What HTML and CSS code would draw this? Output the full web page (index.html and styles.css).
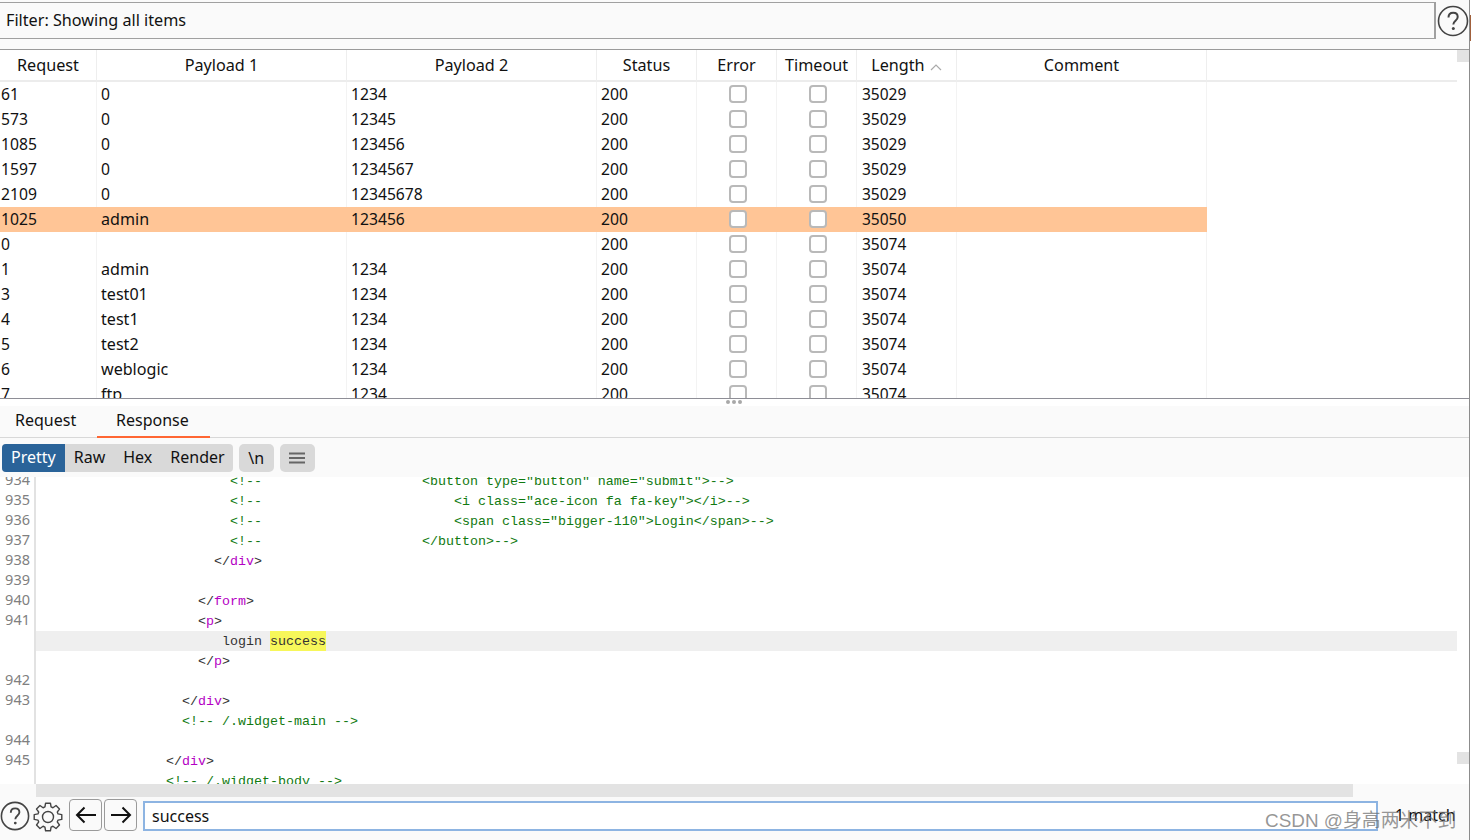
FILE: index.html
```html
<!DOCTYPE html>
<html lang="en">
<head>
<meta charset="utf-8">
<title>Intruder results</title>
<link rel="stylesheet" href="styles.css">
</head>
<body>
<div class="app">
  <div class="filterbar">
    <div class="filterbox">Filter: Showing all items</div>
    <svg class="help-top" width="32" height="32" viewBox="0 0 32 32"><circle cx="16" cy="16" r="14.5" fill="none" stroke="#444" stroke-width="1.6"/><path d="M11.5 12.5c0-3 2-4.700 4.700-4.700s4.500 1.800 4.500 4.300c0 3.600-4.400 3.700-4.400 7.400" fill="none" stroke="#444" stroke-width="2"/><circle cx="16.300" cy="23.500" r="1.500" fill="#444"/></svg>
  </div>
  <div class="results">
    <div class="tablewrap">
      <table class="grid">
        <colgroup><col class="c-req"><col class="c-pay"><col class="c-pay"><col class="c-st"><col class="c-chk"><col class="c-chk"><col class="c-st"><col class="c-pay"><col></colgroup>
        <thead>
          <tr><th>Request</th><th>Payload 1</th><th>Payload 2</th><th>Status</th><th>Error</th><th>Timeout</th><th>Length <svg class="sort" width="12" height="8" viewBox="0 0 12 8"><path d="M1 7l5-5 5 5" fill="none" stroke="#aaa" stroke-width="1.200"/></svg></th><th>Comment</th><th class="blank"></th></tr>
        </thead>
        <tbody>
          <tr><td class="first">61</td><td>0</td><td>1234</td><td>200</td><td class="ck"><i></i></td><td class="ck"><i></i></td><td class="len">35029</td><td></td><td class="blank"></td></tr>
          <tr><td class="first">573</td><td>0</td><td>12345</td><td>200</td><td class="ck"><i></i></td><td class="ck"><i></i></td><td class="len">35029</td><td></td><td class="blank"></td></tr>
          <tr><td class="first">1085</td><td>0</td><td>123456</td><td>200</td><td class="ck"><i></i></td><td class="ck"><i></i></td><td class="len">35029</td><td></td><td class="blank"></td></tr>
          <tr><td class="first">1597</td><td>0</td><td>1234567</td><td>200</td><td class="ck"><i></i></td><td class="ck"><i></i></td><td class="len">35029</td><td></td><td class="blank"></td></tr>
          <tr><td class="first">2109</td><td>0</td><td>12345678</td><td>200</td><td class="ck"><i></i></td><td class="ck"><i></i></td><td class="len">35029</td><td></td><td class="blank"></td></tr>
          <tr class="hit"><td class="first">1025</td><td class="word">admin</td><td>123456</td><td>200</td><td class="ck"><i></i></td><td class="ck"><i></i></td><td class="len">35050</td><td></td><td class="blank"></td></tr>
          <tr><td class="first">0</td><td></td><td></td><td>200</td><td class="ck"><i></i></td><td class="ck"><i></i></td><td class="len">35074</td><td></td><td class="blank"></td></tr>
          <tr><td class="first">1</td><td class="word">admin</td><td>1234</td><td>200</td><td class="ck"><i></i></td><td class="ck"><i></i></td><td class="len">35074</td><td></td><td class="blank"></td></tr>
          <tr><td class="first">3</td><td class="word">test01</td><td>1234</td><td>200</td><td class="ck"><i></i></td><td class="ck"><i></i></td><td class="len">35074</td><td></td><td class="blank"></td></tr>
          <tr><td class="first">4</td><td class="word">test1</td><td>1234</td><td>200</td><td class="ck"><i></i></td><td class="ck"><i></i></td><td class="len">35074</td><td></td><td class="blank"></td></tr>
          <tr><td class="first">5</td><td class="word">test2</td><td>1234</td><td>200</td><td class="ck"><i></i></td><td class="ck"><i></i></td><td class="len">35074</td><td></td><td class="blank"></td></tr>
          <tr><td class="first">6</td><td class="word">weblogic</td><td>1234</td><td>200</td><td class="ck"><i></i></td><td class="ck"><i></i></td><td class="len">35074</td><td></td><td class="blank"></td></tr>
          <tr><td class="first">7</td><td class="word">ftp</td><td>1234</td><td>200</td><td class="ck"><i></i></td><td class="ck"><i></i></td><td class="len">35074</td><td></td><td class="blank"></td></tr>
        </tbody>
      </table>
    </div>
    <div class="vscroll"><div class="vthumb"></div></div>
  </div>
  <div class="sash"><span></span><span></span><span></span></div>
  <div class="tabs">
    <div class="tab tab-req">Request</div>
    <div class="tab tab-active">Response</div>
  </div>
  <div class="toolbar">
    <div class="seg">
      <span class="seg-btn seg-on">Pretty</span><span class="seg-btn">Raw</span><span class="seg-btn">Hex</span><span class="seg-btn">Render</span>
    </div>
    <div class="tool-btn tool-n">\n</div>
    <div class="tool-btn tool-menu"><svg width="16" height="12" viewBox="0 0 16 12"><path d="M0 1.500h16M0 6h16M0 10.500h16" stroke="#666" stroke-width="2"/></svg></div>
  </div>
  <div class="viewer">
    <div class="code">
      <div class="ln"><span class="no">934</span><span class="tx cm">                        &lt;!--                    &lt;button type="button" name="submit"&gt;--&gt;</span></div>
      <div class="ln"><span class="no">935</span><span class="tx cm">                        &lt;!--                        &lt;i class="ace-icon fa fa-key"&gt;&lt;/i&gt;--&gt;</span></div>
      <div class="ln"><span class="no">936</span><span class="tx cm">                        &lt;!--                        &lt;span class="bigger-110"&gt;Login&lt;/span&gt;--&gt;</span></div>
      <div class="ln"><span class="no">937</span><span class="tx cm">                        &lt;!--                    &lt;/button&gt;--&gt;</span></div>
      <div class="ln"><span class="no">938</span><span class="tx">                      &lt;/<b>div</b>&gt;</span></div>
      <div class="ln"><span class="no">939</span><span class="tx"></span></div>
      <div class="ln"><span class="no">940</span><span class="tx">                    &lt;/<b>form</b>&gt;</span></div>
      <div class="ln"><span class="no">941</span><span class="tx">                    &lt;<b>p</b>&gt;</span></div>
      <div class="ln ln-cur"><span class="no"></span><span class="tx">                       login <mark>success</mark></span></div>
      <div class="ln"><span class="no"></span><span class="tx">                    &lt;/<b>p</b>&gt;</span></div>
      <div class="ln"><span class="no">942</span><span class="tx"></span></div>
      <div class="ln"><span class="no">943</span><span class="tx">                  &lt;/<b>div</b>&gt;</span></div>
      <div class="ln"><span class="no"></span><span class="tx cm">                  &lt;!-- /.widget-main --&gt;</span></div>
      <div class="ln"><span class="no">944</span><span class="tx"></span></div>
      <div class="ln"><span class="no">945</span><span class="tx">                &lt;/<b>div</b>&gt;</span></div>
      <div class="ln"><span class="no"></span><span class="tx cm">                &lt;!-- /.widget-body --&gt;</span></div>
    </div>
    <div class="vscroll vscroll-code"><div class="vthumb"></div></div>
  </div>
  <div class="hscroll"><div class="hthumb"></div></div>
  <div class="findbar">
    <svg class="ic-help" width="30" height="30" viewBox="0 0 32 32"><circle cx="16" cy="16" r="14.500" fill="none" stroke="#444" stroke-width="1.700"/><path d="M11.500 12.500c0-3 2-4.700 4.700-4.700s4.500 1.800 4.500 4.300c0 3.600-4.400 3.700-4.400 7.400" fill="none" stroke="#444" stroke-width="2"/><circle cx="16.300" cy="23.500" r="1.500" fill="#444"/></svg>
    <svg class="ic-gear" width="30" height="30" viewBox="0 0 30 30"><polygon points="11.93,4.96 12.57,1.21 17.43,1.21 18.07,4.96 19.93,5.73 23.03,3.53 26.47,6.97 24.27,10.07 25.04,11.93 28.79,12.57 28.79,17.43 25.04,18.07 24.27,19.93 26.47,23.03 23.03,26.47 19.93,24.27 18.07,25.04 17.43,28.79 12.57,28.79 11.93,25.04 10.07,24.27 6.97,26.47 3.53,23.03 5.73,19.93 4.96,18.07 1.21,17.43 1.21,12.57 4.96,11.93 5.73,10.07 3.53,6.97 6.97,3.53 10.07,5.730" fill="none" stroke="#444" stroke-width="1.400" stroke-linejoin="round"/><circle cx="15" cy="15" r="5.500" fill="none" stroke="#444" stroke-width="1.400"/></svg>
    <div class="nav nav-back"><svg width="22" height="18" viewBox="0 0 22 18"><path d="M21 9H2M9.500 1.500L2 9l7.500 7.500" fill="none" stroke="#111" stroke-width="2"/></svg></div>
    <div class="nav"><svg width="22" height="18" viewBox="0 0 22 18"><path d="M1 9h19M12.500 1.500L20 9l-7.500 7.500" fill="none" stroke="#111" stroke-width="2"/></svg></div>
    <div class="findbox">success</div>
    <div class="matches">1 match</div>
    <div class="watermark">CSDN @身高两米不到</div>
  </div>
</div>
</body>
</html>
```
FILE: styles.css
```css
* { box-sizing: border-box; }
html, body { margin: 0; padding: 0; background: #fff; }
body { font-family: "Noto Sans", "Open Sans", sans-serif; font-size: 16.200px; color: #111; overflow: hidden; }
body::after { content: ""; position: absolute; left: 1470px; top: 15px; width: 1px; height: 26px; background: #a0603c; }
.app { position: relative; width: 1470px; height: 840px; display: flex; flex-direction: column; background: #fafafa; border-right: 1px solid #8c8c8c; overflow: hidden; }

.filterbar { flex: 0 0 50px; display: flex; align-items: flex-start; padding-top: 2px; gap: 1px; border-bottom: 1px solid #9a9a9a; background: #fafafa; }
.filterbox { width: 1436px; height: 37px; line-height: 35px; padding-left: 6px; border: 1px solid #a0a0a0; border-width: 1px 2px 1px 0; }
.help-top { margin-top: 3px; }

.results { flex: 0 0 349px; display: flex; background: #fff; border-bottom: 1px solid #8e8e96; }
.tablewrap { flex: 0 0 1457px; height: 348px; overflow: hidden; }
.grid { width: 1457px; table-layout: fixed; border-collapse: separate; border-spacing: 0; }
.c-req { width: 97px; }
.c-pay { width: 250px; }
.c-st { width: 100px; }
.c-chk { width: 80px; }
.grid th { height: 32px; padding: 0; font-weight: 400; text-align: center; border-right: 1px solid #eeeeee; border-bottom: 2px solid #ececec; }
.grid td { height: 25px; padding: 0 0 0 4px; font-size: 15.700px; border-right: 1px solid #f3f3f3; white-space: nowrap; overflow: hidden; line-height: 25px; vertical-align: top; }
.grid .blank { border-right: 0; }
.grid td.first { padding-left: 1px; }
.grid td.word { font-size: 16.100px; }
.grid td.len { padding-left: 5px; font-size: 15.500px; }
.grid .hit td { background: #ffc596; border-right-color: #ffc596; }
.grid .hit td.blank { background: #fff; }
.ck { text-align: center; }
.grid td.ck { padding: 0 0 0 3px; }
.ck i { display: inline-block; width: 18px; height: 18px; margin-top: 3px; vertical-align: top; background: #fff; border: 2px solid #b9b9b9; border-radius: 4px; }
.sort { margin-left: 1px; }

.vscroll { flex: 0 0 12px; background: #fff; }
.vthumb { height: 12px; background: #e3e3e3; }

.sash { flex: 0 0 7px; display: flex; justify-content: center; align-items: center; gap: 2px; padding: 0 2px 1px 0; background: #fff; }
.sash span { width: 4px; height: 4px; border-radius: 50%; background: #a8a8a8; }

.tabs { flex: 0 0 32px; min-height: 0; display: flex; font-size: 16px; border-bottom: 1px solid #d8d8d8; background: #fafafa; }
.tab { height: 31px; line-height: 28px; }
.tab-req { width: 97px; padding-left: 15px; }
.tab-active { height: 32px; padding: 0 21px 0 19px; border-bottom: 2px solid #ff6633; }

.toolbar { flex: 0 0 39px; display: flex; gap: 6px; padding: 6px 0 0 2px; font-size: 16px; background: #fafafa; }
.seg { display: flex; height: 28px; background: #d9d9d9; border-radius: 4px; overflow: hidden; }
.seg-btn { padding: 0 9px; line-height: 26px; }
.seg-btn:last-child { padding-right: 8px; }
.seg-on { background: #2a6399; color: #fff; }
.tool-btn { height: 28px; background: #d9d9d9; border-radius: 5px; display: flex; align-items: center; justify-content: center; }
.tool-n { width: 35px; }
.tool-menu { width: 35px; }

.viewer { flex: 0 0 307px; display: flex; background: #fff; overflow: hidden; }
.code { flex: 0 0 1457px; height: 307px; overflow: hidden; font-family: "Liberation Mono", "DejaVu Sans Mono", monospace; font-size: 13.330px; color: #333; }
.code .ln:first-child { margin-top: -6px; }
.ln { display: flex; height: 20px; line-height: 20px; white-space: pre; }
.no { flex: 0 0 36px; padding-right: 4px; text-align: right; border-right: 2px solid #e2e2e2; color: #808080; font-family: "Noto Sans", sans-serif; font-size: 14.500px; line-height: 16px; background: #fff; }
.tx { flex: 1; padding-left: 2px; line-height: 22px; }
.ln-cur .tx { background: #efefef; }
.tx b { font-weight: 400; color: #b400c4; }
.cm { color: #117a11; }
mark { display: inline-block; height: 20px; vertical-align: top; background: #f7f75a; color: #333; }
.vscroll-code { padding-top: 275px; }

.hscroll { flex: 0 0 13px; padding-left: 36px; background: #fafafa; }
.hthumb { width: 1317px; height: 13px; background: #e3e3e3; }

.findbar { flex: 1; display: flex; align-items: flex-start; background: #fafafa; padding: 2px 0 0 0; position: relative; font-size: 16px; }
.ic-help { margin: 2px 0 0 0; }
.ic-gear { margin: 3px 0 0 3px; }
.nav { width: 33px; height: 32px; margin-left: 2px; display: flex; align-items: center; justify-content: center; border: 1px solid #9a9a9a; border-radius: 4px; background: #fafafa; }
.nav-back { margin-left: 6px; }
.findbox { width: 1235px; height: 30px; margin: 2px 0 0 6px; padding-left: 7px; line-height: 26px; background: #fff; border: 2px solid #8db4e2; }
.matches { margin: 3px 0 0 17px; line-height: 26px; }
.watermark { position: absolute; left: 1265px; top: 12px; font-family: "Liberation Sans", "Noto Sans CJK SC", sans-serif; font-size: 18.900px; line-height: 24px; color: rgba(110,110,110,.72); white-space: nowrap; }
```
